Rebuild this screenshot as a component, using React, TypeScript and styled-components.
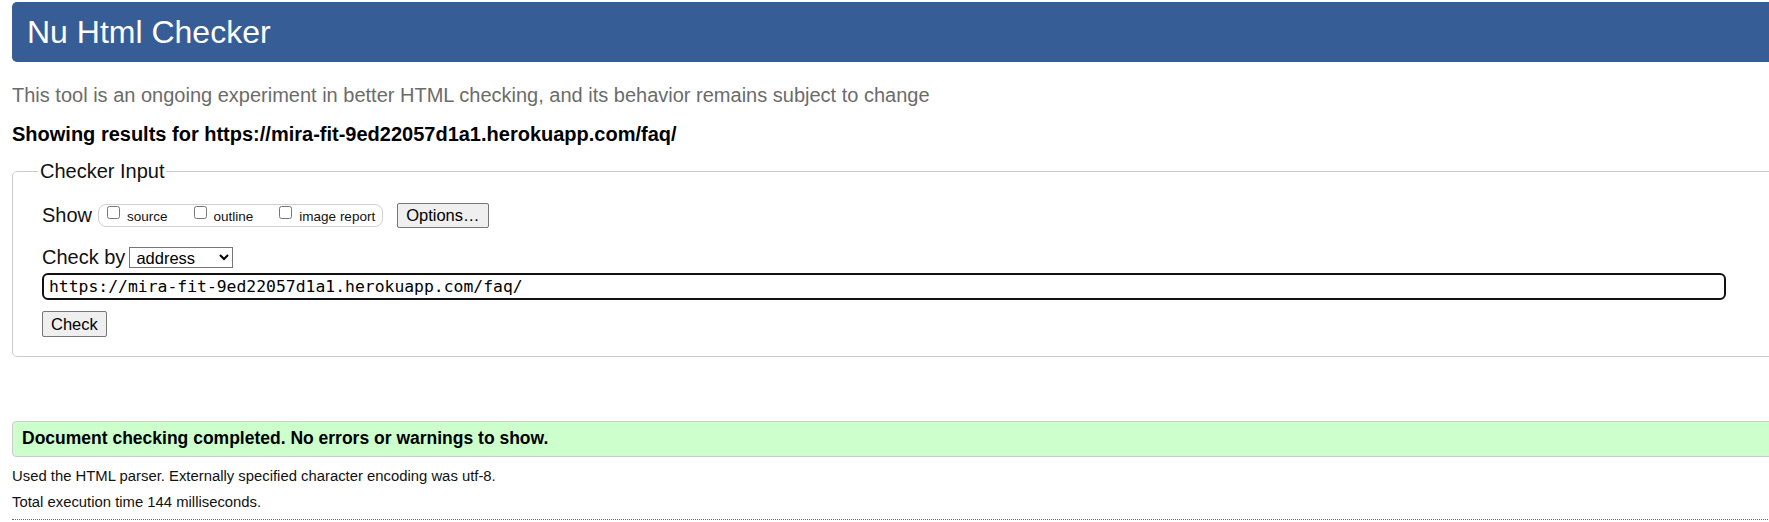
import React from 'react';
import styled, { createGlobalStyle } from 'styled-components';

const GlobalStyle = createGlobalStyle`
  html, body {
    margin: 0;
    padding: 0;
    background: #fff;
    overflow: hidden;
  }
  body {
    font-family: "Liberation Sans", Arial, sans-serif;
    color: #000;
  }
`;

const Page = styled.main`
  width: 1800px;
  padding: 2px 0 0 12px;
`;

const Header = styled.h1`
  margin: 0;
  padding: 11px 15px;
  background: #365d95;
  color: #fff;
  font-size: 32px;
  font-weight: normal;
  line-height: 38px;
  border-radius: 5px;
`;

const Subtitle = styled.p`
  margin: 22px 0 0;
  font-size: 20px;
  line-height: 23px;
  color: #6b6b6b;
`;

const Results = styled.p`
  margin: 16px 0 0;
  font-size: 20px;
  font-weight: bold;
  line-height: 23px;
`;

const Fieldset = styled.fieldset`
  margin: 14px 0 0;
  padding: 20px 29px 19px;
  border: 1px solid #cccccc;
  border-radius: 5px;
  min-width: 0;
`;

const Legend = styled.legend`
  margin-left: -4px;
  padding: 0 1px 0 2px;
  font-size: 20px;
  line-height: 23px;
  color: #111;
`;

const Row = styled.div<{ $gapTop?: number; $height?: number }>`
  display: flex;
  align-items: center;
  margin-top: ${(p) => p.$gapTop ?? 0}px;
  height: ${(p) => p.$height ?? 23}px;
`;

const RowLabel = styled.span`
  font-size: 20px;
  line-height: 23px;
  color: #111;
`;

const CheckGroup = styled.div`
  display: flex;
  align-items: stretch;
  height: 23px;
  box-sizing: border-box;
  margin-left: 6px;
  padding: 0 7px 0 8px;
  border: 1px solid #d0d0d0;
  border-radius: 8px;
  gap: 26px;
`;

const CheckItem = styled.label`
  display: flex;
  align-items: flex-end;
  padding-bottom: 2px;
  font-size: 13.5px;
  line-height: 15px;
  color: #111;
`;

const Box = styled.input`
  align-self: flex-start;
  width: 13px;
  height: 13px;
  margin: 1px 7px 0 0;
`;

const Button = styled.button<{ $gapLeft?: number; $height?: number }>`
  margin-left: ${(p) => p.$gapLeft ?? 0}px;
  height: ${(p) => p.$height ?? 25}px;
  box-sizing: border-box;
  padding: 0 8px;
  font-family: "Liberation Sans", Arial, sans-serif;
  font-size: 16.5px;
  color: #000;
  background: #efefef;
  border: 1px solid #767676;
  border-radius: 2px;
`;

const Select = styled.select`
  margin-left: 4px;
  width: 104px;
  height: 21px;
  box-sizing: border-box;
  font-family: "Liberation Sans", Arial, sans-serif;
  font-size: 16.5px;
  color: #000;
  background: #fff;
  border: 1px solid #767676;
  border-radius: 0;
  padding: 0 2px;
`;

const UrlInput = styled.input`
  display: block;
  margin-top: 4px;
  width: 1684px;
  height: 27px;
  box-sizing: border-box;
  padding: 0 5px;
  border: 2px solid #111;
  border-radius: 6px;
  font-family: "DejaVu Sans Mono", "Liberation Mono", monospace;
  font-size: 16.4px;
  color: #000;
  outline: none;
`;

const Success = styled.p`
  margin: 64px 0 0;
  height: 36px;
  box-sizing: border-box;
  padding: 0 9px;
  background: #ccffcc;
  border: 1px solid #cccccc;
  border-radius: 4px;
  font-size: 17.5px;
  font-weight: bold;
  line-height: 33px;
`;

const InfoList = styled.div`
  margin-top: 6px;
  padding-bottom: 4px;
  border-bottom: 1px dotted #666;
`;

const Info = styled.p`
  margin: 0;
  font-size: 14.85px;
  line-height: 26px;
  color: #111;
`;

export default function App() {
  return (
    <>
      <GlobalStyle />
      <Page>
        <Header>Nu Html Checker</Header>
        <Subtitle>
          This tool is an ongoing experiment in better HTML checking, and its behavior remains subject to change
        </Subtitle>
        <Results>Showing results for https://mira-fit-9ed22057d1a1.herokuapp.com/faq/</Results>
        <Fieldset>
          <Legend>Checker Input</Legend>
          <Row $height={25}>
            <RowLabel>Show</RowLabel>
            <CheckGroup>
              <CheckItem>
                <Box type="checkbox" />
                source
              </CheckItem>
              <CheckItem>
                <Box type="checkbox" />
                outline
              </CheckItem>
              <CheckItem>
                <Box type="checkbox" />
                image report
              </CheckItem>
            </CheckGroup>
            <Button $gapLeft={14}>Options…</Button>
          </Row>
          <Row $gapTop={18}>
            <RowLabel>Check by</RowLabel>
            <Select defaultValue="address">
              <option value="address">address</option>
              <option value="file">file upload</option>
              <option value="text">text input</option>
            </Select>
          </Row>
          <UrlInput type="url" defaultValue="https://mira-fit-9ed22057d1a1.herokuapp.com/faq/" />
          <Row $gapTop={11} $height={26}>
            <Button $height={26}>Check</Button>
          </Row>
        </Fieldset>
        <Success>Document checking completed. No errors or warnings to show.</Success>
        <InfoList>
          <Info>Used the HTML parser. Externally specified character encoding was utf-8.</Info>
          <Info>Total execution time 144 milliseconds.</Info>
        </InfoList>
      </Page>
    </>
  );
}
